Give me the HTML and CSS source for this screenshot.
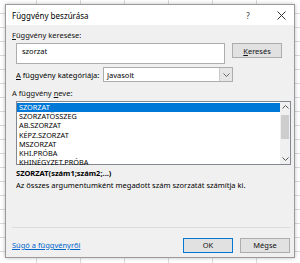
FILE: index.html
```html
<!DOCTYPE html>
<html lang="hu">
<head>
    <meta charset="UTF-8">
    <title>Függvény beszúrása</title>
    <link rel="stylesheet" href="styles.css">
</head>
<body>
    <div class="dialog">
        <div class="titlebar">
            <span class="title">Függvény beszúrása</span>
            <span class="help">?</span>
            <span class="close">
                <svg width="9" height="9" viewBox="0 0 9 9"><path d="M0.5 0.5 L8.5 8.5 M8.5 0.5 L0.5 8.5" stroke="#333" stroke-width="1"/></svg>
            </span>
        </div>
        <div class="content">
            <div class="label"><u>F</u>üggvény keresése:</div>
            <div class="search-row">
                <div class="search-box">szorzat</div>
                <button class="btn"><u>K</u>eresés</button>
            </div>
            <div class="category-row">
                <span class="cat-label"><u>A</u> függvény kategóriája:</span>
                <div class="select">
                    <span class="select-value">Javasolt</span>
                    <span class="select-arrow">
                        <svg width="7" height="4" viewBox="0 0 7 4"><path d="M0.5 0.5 L3.5 3.5 L6.5 0.5" fill="none" stroke="#666" stroke-width="1"/></svg>
                    </span>
                </div>
            </div>
            <div class="label name-label">A függvény <u>n</u>eve:</div>
            <div class="listbox">
                <div class="items">
                    <div class="item selected">SZORZAT</div>
                    <div class="item">SZORZATÖSSZEG</div>
                    <div class="item">AB.SZORZAT</div>
                    <div class="item">KÉPZ.SZORZAT</div>
                    <div class="item">MSZORZAT</div>
                    <div class="item">KHI.PRÓBA</div>
                    <div class="item">KHINÉGYZET.PRÓBA</div>
                </div>
                <div class="scrollbar">
                    <svg class="arrow" width="7" height="4" viewBox="0 0 7 4"><path d="M0.5 3.5 L3.5 0.5 L6.5 3.5" fill="none" stroke="#555" stroke-width="1"/></svg>
                    <div class="track"><div class="thumb"></div></div>
                    <svg class="arrow" width="7" height="4" viewBox="0 0 7 4"><path d="M0.5 0.5 L3.5 3.5 L6.5 0.5" fill="none" stroke="#555" stroke-width="1"/></svg>
                </div>
            </div>
            <div class="signature">SZORZAT(szám1;szám2;...)</div>
            <div class="description">Az összes argumentumként megadott szám szorzatát számítja ki.</div>
            <div class="separator"></div>
            <div class="footer">
                <a class="help-link" href="#">Súgó a függvényről</a>
                <button class="btn btn-default">OK</button>
                <button class="btn">Mégse</button>
            </div>
        </div>
    </div>
</body>
</html>
```

FILE: styles.css
```css
body {
    margin: 0;
    width: 300px;
    height: 263px;
    overflow: hidden;
    font-family: "Noto Sans", sans-serif;
    font-size: 7.5px;
    color: #000;
    background-color: #fff;
    background-image:
        repeating-linear-gradient(to right, transparent 0, transparent 36px, #dadada 36px, #dadada 37px, transparent 37px, transparent 44px),
        repeating-linear-gradient(to bottom, transparent 0, transparent 13px, #dadada 13px, #dadada 14px);
}
.dialog {
    margin: 4px 0 0 5px;
    width: 288px;
    height: 252px;
    border: 1px solid #9a9a9a;
    background: #f0f0f0;
    box-shadow: 0 0 4px rgba(0,0,0,0.25);
    display: flex;
    flex-direction: column;
}
.titlebar {
    height: 20px;
    background: #fff;
    display: flex;
    align-items: center;
    padding-left: 6px;
    font-size: 8px;
}
.title {
    flex: 1;
}
.help {
    width: 12px;
    text-align: center;
    font-size: 8px;
    color: #333;
}
.close {
    width: 20px;
    margin-left: 17px;
    margin-right: 3px;
    display: flex;
    justify-content: center;
}
.content {
    flex: 1;
    display: flex;
    flex-direction: column;
    padding: 4px 4px 4px 6px;
}
.label {
    height: 12px;
    line-height: 12px;
    color: #111;
}
.search-row {
    display: flex;
    margin: 2px 0 0 4px;
    height: 21px;
}
.search-box {
    width: 209px;
    border: 1px solid #adadad;
    background: #fff;
    padding: 2px 0 0 5px;
    box-sizing: border-box;
    height: 21px;
    line-height: 10px;
}
.btn {
    font-family: inherit;
    font-size: 7.5px;
    color: #111;
    background: #e1e1e1;
    border: 1px solid #adadad;
    padding: 0;
    width: 50px;
    height: 15px;
    margin-left: 7px;
}
.btn-default {
    border-color: #0078d7;
    margin-left: auto;
}
.category-row {
    display: flex;
    align-items: center;
    margin: 3px 0 0 4px;
    height: 15px;
}
.cat-label {
    width: 87px;
}
.select {
    width: 130px;
    height: 15px;
    box-sizing: border-box;
    border: 1px solid #adadad;
    background: #fff;
    display: flex;
    align-items: center;
}
.select-value {
    flex: 1;
    padding-left: 3px;
}
.select-arrow {
    width: 12px;
    height: 13px;
    border-left: 1px solid #c8c8c8;
    background: #e6e6e6;
    display: flex;
    align-items: center;
    justify-content: center;
}
.name-label {
    margin-top: 5px;
}
.listbox {
    margin: 2px 0 0 4px;
    width: 275px;
    height: 64px;
    box-sizing: border-box;
    border: 1px solid #828790;
    background: #fff;
    display: flex;
}
.items {
    flex: 1;
    padding-top: 1px;
}
.item {
    height: 9.2px;
    line-height: 9.2px;
    padding-left: 2px;
    font-size: 7.3px;
}
.item.selected {
    background: #0078d7;
    color: #fff;
}
.scrollbar {
    width: 10px;
    display: flex;
    flex-direction: column;
    align-items: center;
    background: #f0f0f0;
}
.arrow {
    margin: 3px 0;
}
.track {
    flex: 1;
    width: 100%;
}
.thumb {
    margin: 3px 1px 0;
    height: 24px;
    background: #cdcdcd;
}
.signature {
    margin: 3px 0 0 4px;
    font-weight: bold;
    height: 10px;
    line-height: 10px;
}
.description {
    margin: 2px 0 0 4px;
    height: 10px;
    line-height: 10px;
}
.separator {
    margin-top: auto;
    margin-bottom: 9px;
    border-top: 1px solid #dcdcdc;
}
.footer {
    display: flex;
    align-items: center;
    height: 16px;
}
.help-link {
    color: #0066cc;
    text-decoration: underline;
}
```
